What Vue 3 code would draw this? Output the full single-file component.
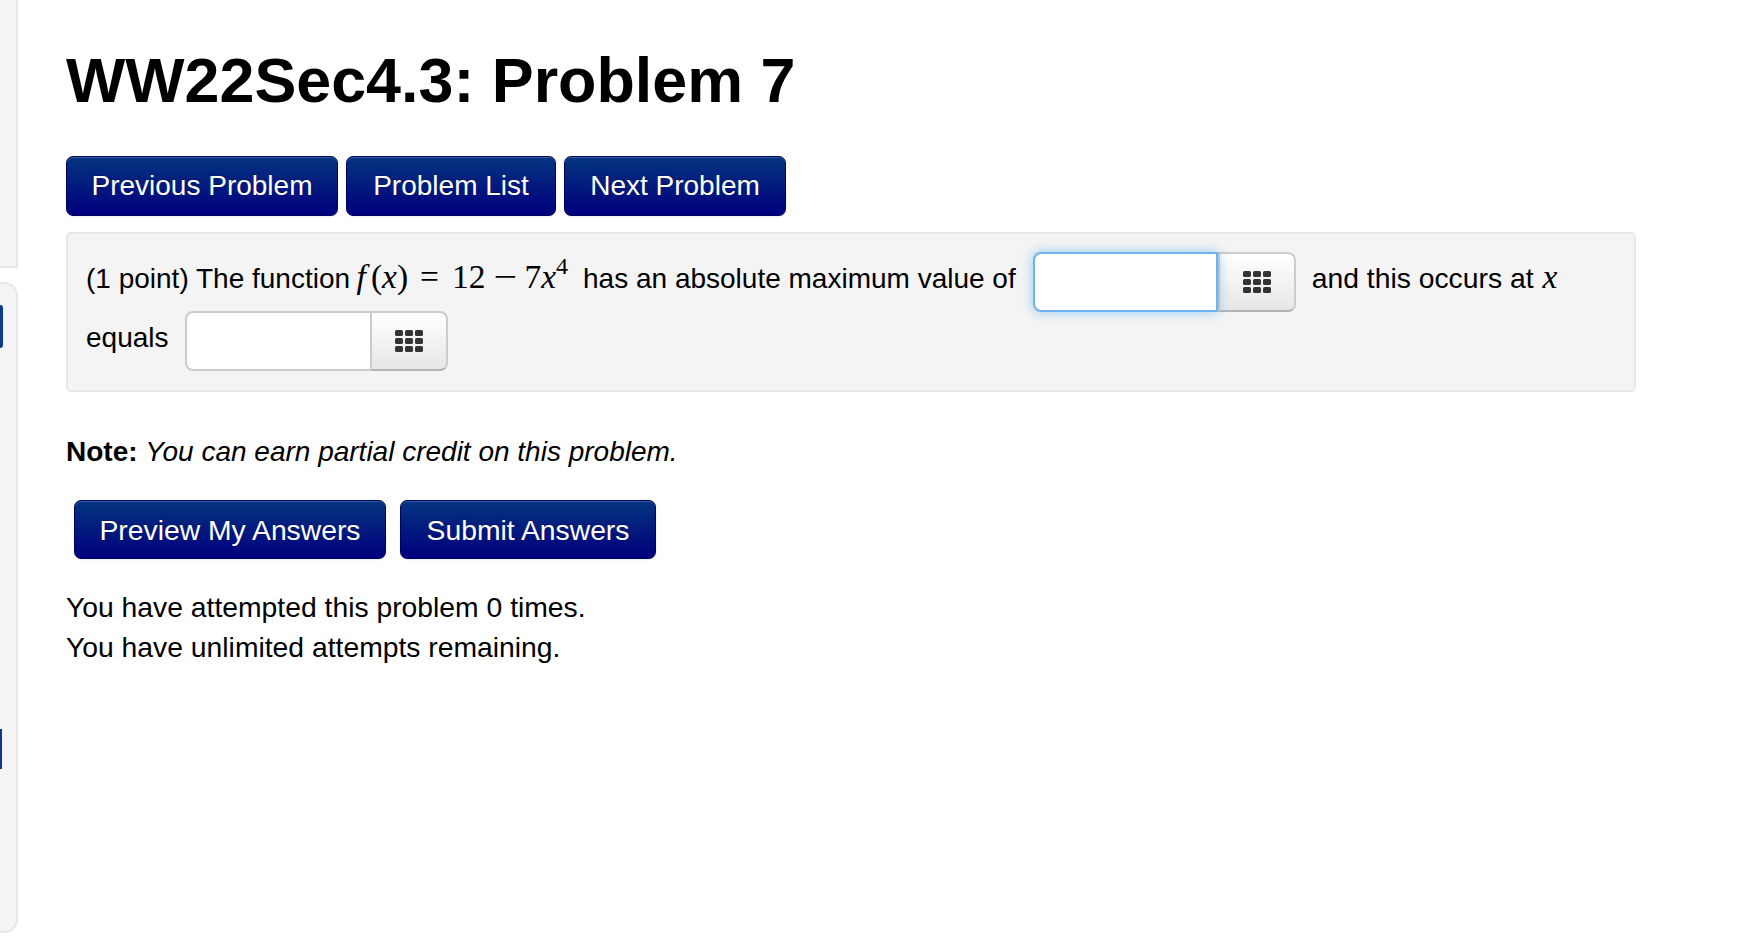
<script setup>
const navTop = ['Previous Problem', 'Problem List', 'Next Problem']
const navBottom = ['Preview My Answers', 'Submit Answers']
const iconRows = [0, 8, 16]
const iconCols = [0, 10, 20]
</script>

<template>
  <div class="page">
    <aside class="rail">
      <div class="panel panel-top"></div>
      <div class="panel panel-bottom">
        <span class="mark mark-a"></span>
        <span class="mark mark-b"></span>
      </div>
    </aside>
    <main class="main">
      <h1 class="title">WW22Sec4.3: Problem 7</h1>
      <nav class="btns btns-top">
        <button v-for="b in navTop" :key="b" class="btn top-btn">{{ b }}</button>
      </nav>
      <section class="well">
        <span class="copy">(1 point) The function</span>
        <span class="math">
          <i class="f">f</i><span class="p1">(</span><i>x</i><span>)</span>
          <span class="eq">=</span><span class="n12">12</span><span class="minus">−</span><span class="n7">7</span><i>x</i><sup class="sup">4</sup>
        </span>
        <span class="copy after-math">has an absolute maximum value of</span>
        <span class="group focus">
          <span class="field"></span>
          <span class="addon">
            <svg class="grid" width="28" height="22" viewBox="0 0 28 22">
              <template v-for="r in iconRows" :key="r">
                <rect v-for="c in iconCols" :key="c" :x="c" :y="r" width="8" height="6" rx="1.6" fill="#333" />
              </template>
            </svg>
          </span>
        </span>
        <span class="copy after-group">and this occurs at</span>
        <i class="math var">x</i>
        <br />
        <span class="copy">equals</span>
        <span class="group second">
          <span class="field"></span>
          <span class="addon">
            <svg class="grid" width="28" height="22" viewBox="0 0 28 22">
              <template v-for="r in iconRows" :key="r">
                <rect v-for="c in iconCols" :key="c" :x="c" :y="r" width="8" height="6" rx="1.6" fill="#333" />
              </template>
            </svg>
          </span>
        </span>
      </section>
      <p class="note"><b>Note:</b> <em>You can earn partial credit on this problem.</em></p>
      <div class="btns btns-bottom">
        <button v-for="b in navBottom" :key="b" class="btn bottom-btn">{{ b }}</button>
      </div>
      <p class="attempts">You have attempted this problem 0 times.<br />You have unlimited attempts remaining.</p>
    </main>
  </div>
</template>

<style scoped>
.page {
  display: flex;
  height: 950px;
  overflow: hidden;
  background: #fff;
  color: #000;
  font-family: "Liberation Sans", Arial, sans-serif;
  font-size: 28px;
}
.rail {
  width: 18px;
  flex: none;
  display: flex;
  flex-direction: column;
  gap: 14px;
}
.panel {
  background: #f5f5f5;
  border-right: 2px solid #e6e6e6;
  box-sizing: border-box;
}
.panel-top {
  height: 268px;
  border-bottom: 2px solid #e6e6e6;
}
.panel-bottom {
  height: 651px;
  border-top: 2px solid #e6e6e6;
  border-bottom: 2px solid #e6e6e6;
  border-radius: 0 14px 14px 0;
  display: flex;
  flex-direction: column;
  align-items: flex-start;
}
.mark {
  display: block;
  background: #0c3a8c;
}
.mark-a {
  width: 3px;
  height: 43px;
  margin-top: 21px;
  border-radius: 0 4px 4px 0;
}
.mark-b {
  width: 2px;
  height: 40px;
  margin-top: 381px;
}
.main {
  flex: none;
  width: 1570px;
  padding-left: 48px;
}
.title {
  margin: 48px 0 0;
  font-size: 62.8px;
  line-height: 64px;
  font-weight: 700;
}
.btns {
  display: flex;
}
.btns-top {
  margin-top: 44px;
  gap: 8px;
}
.btn {
  height: 60px;
  padding: 0;
  border: 1px solid #00005e;
  border-radius: 7px;
  background: linear-gradient(to bottom, #04347f, #00007d);
  box-shadow: inset 0 1px 0 rgba(255, 255, 255, 0.2), 0 1px 2px rgba(0, 0, 0, 0.08);
  color: #fff;
  font: inherit;
  font-size: 28px;
  line-height: 58px;
  text-shadow: 0 -1px 0 rgba(0, 0, 0, 0.25);
}
.top-btn:nth-child(1) { width: 272px; }
.top-btn:nth-child(2) { width: 210px; }
.top-btn:nth-child(3) { width: 222px; }
.well {
  box-sizing: border-box;
  height: 160px;
  margin-top: 16px;
  padding: 18px;
  border: 2px solid #e8e8e8;
  border-radius: 5px;
  background: #f4f4f4;
  line-height: 53px;
  white-space: nowrap;
}
.math {
  font-family: "Liberation Serif", "Times New Roman", serif;
  font-size: 33.5px;
  line-height: 0;
}
.f { margin-left: 6.5px; }
.p1 { margin-left: 5px; }
.eq { margin-left: 12px; }
.n12 { margin-left: 13px; }
.minus {
  display: inline-block;
  margin-left: 10px;
  transform: scaleX(1.25);
}
.n7 { margin-left: 10px; }
.sup {
  font-size: 24px;
  line-height: 0;
  vertical-align: 14px;
}
.after-math { margin-left: 15px; }
.group {
  display: inline-flex;
  vertical-align: top;
  height: 60px;
  line-height: normal;
}
.focus { margin-left: 17px; margin-bottom: -1px; }
.second { margin-left: 16px; }
.field {
  box-sizing: border-box;
  width: 185px;
  height: 60px;
  background: #fff;
  border: 2px solid #ccc;
  border-right: 0;
  border-radius: 8px 0 0 8px;
}
.addon {
  box-sizing: border-box;
  width: 78px;
  height: 60px;
  display: flex;
  align-items: center;
  justify-content: center;
  border: 2px solid #ccc;
  border-bottom-color: #b3b3b3;
  border-radius: 0 8px 8px 0;
  background: linear-gradient(to bottom, #fff, #e6e6e6);
}
.focus .field {
  border: 2px solid #6db3ee;
  box-shadow: 0 0 12px rgba(82, 168, 236, 0.6);
  position: relative;
}
.after-group { margin-left: 16px; font-size: 28.3px; }
.var { margin-left: 9px; }
.note {
  margin: 40px 0 0;
  line-height: 40px;
}
.btns-bottom {
  margin-top: 28px;
  margin-left: 8px;
  gap: 14px;
}
.bottom-btn {
  height: 59px;
  font-size: 28.3px;
}
.bottom-btn:nth-child(1) { width: 312px; }
.bottom-btn:nth-child(2) { width: 256px; }
.attempts {
  margin: 28px 0 0;
  font-size: 28.3px;
  line-height: 40px;
}
</style>

<style>
body { margin: 0; }
</style>
